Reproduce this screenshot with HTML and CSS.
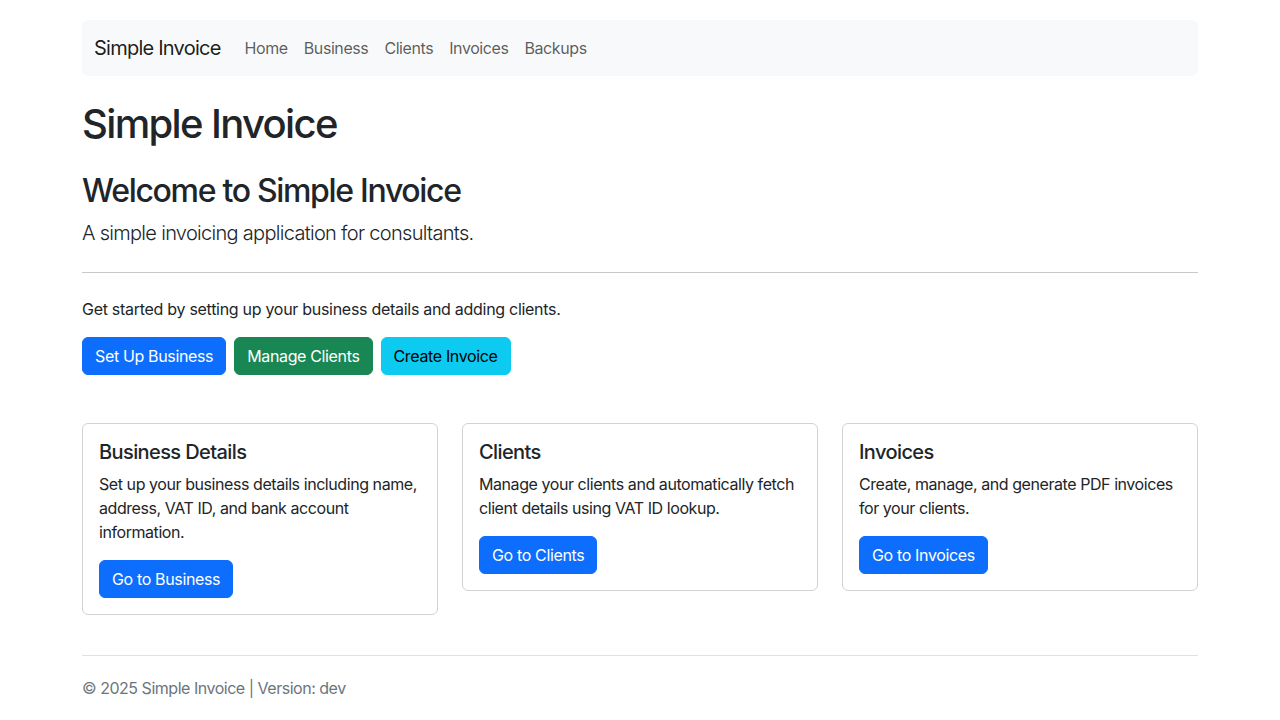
FILE: index.html
```html
<!DOCTYPE html>
<html lang="en">
<head>
<meta charset="utf-8">
<title>Simple Invoice</title>
<link rel="stylesheet" href="styles.css">
</head>
<body>
<div class="container">
  <nav class="navbar">
    <a class="brand" href="#">Simple Invoice</a>
    <ul class="nav">
      <li><a href="#">Home</a></li>
      <li><a href="#">Business</a></li>
      <li><a href="#">Clients</a></li>
      <li><a href="#">Invoices</a></li>
      <li><a href="#">Backups</a></li>
    </ul>
  </nav>

  <main>
    <h1 class="page-title">Simple Invoice</h1>
    <section class="hero">
      <h2 class="hero-title">Welcome to Simple Invoice</h2>
      <p class="lead">A simple invoicing application for consultants.</p>
      <hr class="divider">
      <p class="intro">Get started by setting up your business details and adding clients.</p>
      <div class="actions">
        <a class="btn btn-primary" href="#">Set Up Business</a>
        <a class="btn btn-success" href="#">Manage Clients</a>
        <a class="btn btn-info" href="#">Create Invoice</a>
      </div>
    </section>

    <div class="cards">
      <div class="card">
        <h5 class="card-title">Business Details</h5>
        <p class="card-text">Set up your business details including name, address, VAT ID, and bank account information.</p>
        <a class="btn btn-primary" href="#">Go to Business</a>
      </div>
      <div class="card">
        <h5 class="card-title">Clients</h5>
        <p class="card-text">Manage your clients and automatically fetch client details using VAT ID lookup.</p>
        <a class="btn btn-primary" href="#">Go to Clients</a>
      </div>
      <div class="card">
        <h5 class="card-title">Invoices</h5>
        <p class="card-text">Create, manage, and generate PDF invoices for your clients.</p>
        <a class="btn btn-primary" href="#">Go to Invoices</a>
      </div>
    </div>
  </main>

  <footer class="footer">
    <p>© 2025 Simple Invoice | Version: dev</p>
  </footer>
</div>
</body>
</html>
```

FILE: styles.css
```css
* { box-sizing: border-box; }

body {
  margin: 0;
  font-family: Inter, "Noto Sans", "Liberation Sans", sans-serif;
  font-size: 16px;
  line-height: 1.5;
  letter-spacing: -0.018em;
  color: #212529;
  background: #fff;
}

a { text-decoration: none; }

.container {
  width: 1140px;
  margin: 0 auto;
  padding: 20px 12px 0;
}

.navbar {
  display: flex;
  align-items: center;
  background: #f8f9fa;
  border-radius: 6px;
  padding: 8px 12px;
  height: 56px;
  margin-bottom: 24px;
}

.brand {
  font-size: 20px;
  line-height: 30px;
  letter-spacing: -0.038em;
  color: rgba(0,0,0,.9);
  margin-right: 16px;
  padding: 5px 0;
}

.nav {
  display: flex;
  list-style: none;
  margin: 0;
  padding: 0;
}

.nav a {
  display: block;
  padding: 8px;
  letter-spacing: -0.026em;
  color: rgba(0,0,0,.65);
}

.page-title {
  font-size: 40px;
  font-weight: 500;
  line-height: 1.2;
  letter-spacing: -0.041em;
  margin: 0 0 24px;
}

.hero-title {
  font-size: 32px;
  font-weight: 500;
  line-height: 1.2;
  letter-spacing: -0.041em;
  margin: 0 0 8px;
}

.lead {
  font-size: 20px;
  font-weight: 300;
  line-height: 30px;
  letter-spacing: -0.035em;
  margin: 0;
}

.divider {
  margin: 24px 0;
  border: 0;
  border-top: 1px solid #212529;
  opacity: .25;
}

.intro { margin: 0 0 16px; }

.actions {
  display: flex;
  gap: 8px;
}

.btn {
  display: inline-block;
  padding: 6px 12px;
  font-size: 16px;
  line-height: 24px;
  letter-spacing: -0.022em;
  border-radius: 6px;
  border: 1px solid transparent;
  color: #fff;
}

.btn-primary { background: #0d6efd; border-color: #0d6efd; }
.btn-success { background: #198754; border-color: #198754; }
.btn-info { background: #0dcaf0; border-color: #0dcaf0; color: #000; }

.cards {
  display: grid;
  grid-template-columns: repeat(3, 1fr);
  gap: 24px;
  align-items: start;
  margin-top: 48px;
}

.card {
  border: 1px solid rgba(0,0,0,.175);
  border-radius: 6px;
  padding: 16px;
}

.card-title {
  font-size: 20px;
  font-weight: 500;
  line-height: 1.2;
  letter-spacing: -0.03em;
  margin: 0 0 8px;
}

.card-text {
  margin: 0 0 16px;
  letter-spacing: -0.027em;
}

.footer {
  margin-top: 40px;
  border-top: 1px solid #dee2e6;
  padding-top: 20px;
  color: #6c757d;
  letter-spacing: -0.03em;
}

.footer p { margin: 0 0 16px; }
```
